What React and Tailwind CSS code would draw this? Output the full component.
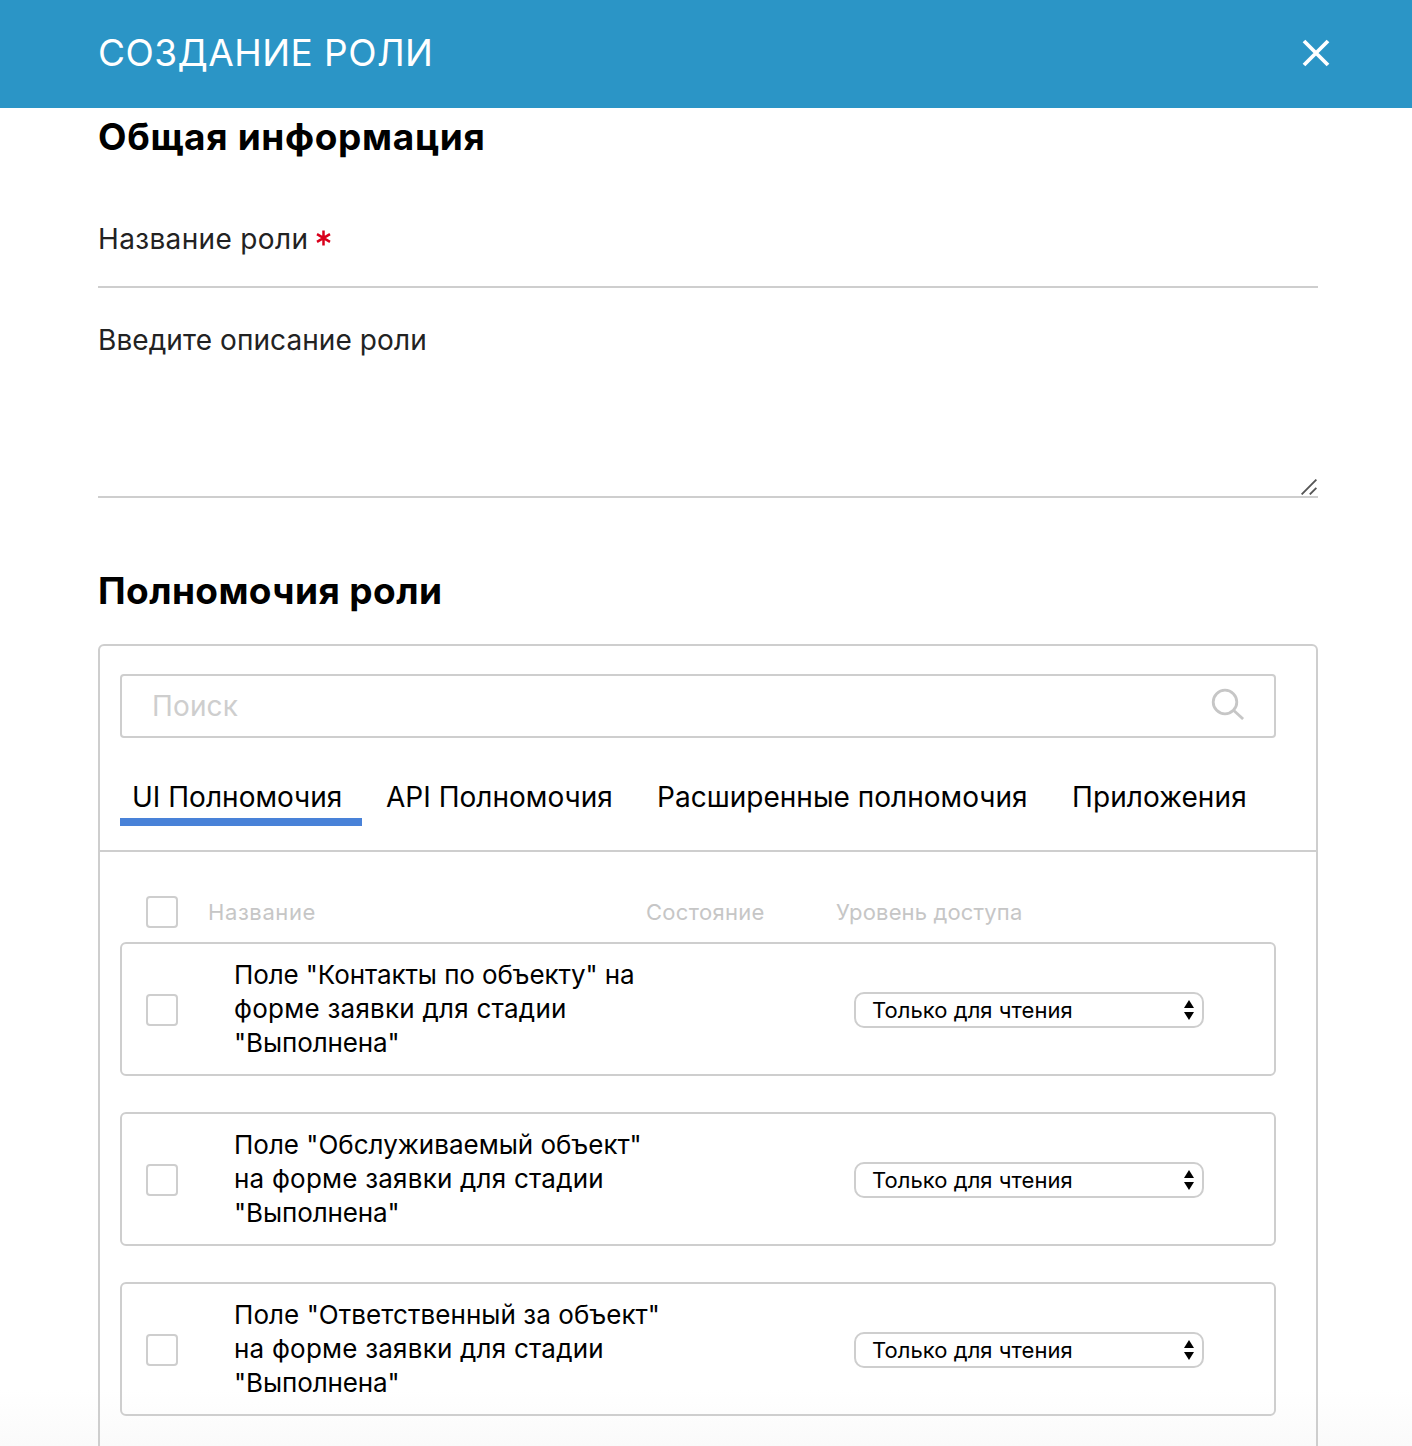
const rows = [
  [
    { text: 'Поле "Контакты по объекту" на', track: "tracking-[-0.1px]" },
    { text: "форме заявки для стадии", track: "tracking-[0.25px]" },
    { text: '"Выполнена"', track: "tracking-[-0.1px]" },
  ],
  [
    { text: 'Поле "Обслуживаемый объект"', track: "tracking-[0px]" },
    { text: "на форме заявки для стадии", track: "tracking-[0.22px]" },
    { text: '"Выполнена"', track: "tracking-[-0.1px]" },
  ],
  [
    { text: 'Поле "Ответственный за объект"', track: "tracking-[0.06px]" },
    { text: "на форме заявки для стадии", track: "tracking-[0.22px]" },
    { text: '"Выполнена"', track: "tracking-[-0.1px]" },
  ],
];

function Checkbox({ label }) {
  return (
    <span
      role="checkbox"
      aria-checked="false"
      aria-label={label}
      className="block size-8 shrink-0 rounded border-2 border-[#cecece] bg-white"
    />
  );
}

function AccessSelect() {
  return (
    <div className="mt-0.5 flex h-9 w-[350px] items-center justify-between rounded-[10px] border-2 border-[#cecece] bg-white pr-2 pl-4">
      <span className="text-[22px] leading-8 tracking-[0.05px] whitespace-nowrap">Только для чтения</span>
      <svg width="10" height="20" viewBox="0 0 10 20" aria-hidden="true">
        <path d="M5 0 10 8H0ZM0 12h10L5 20Z" fill="#000" />
      </svg>
    </div>
  );
}

function PermissionRow({ lines }) {
  return (
    <div className="flex h-[134px] w-[1156px] items-center rounded-md border-2 border-[#cecece] pl-6">
      <div className="mt-0.5">
        <Checkbox label={lines[0].text} />
      </div>
      <div className="ml-14 w-[620px] text-[26px] leading-[34px] whitespace-nowrap">
        {lines.map((line) => (
          <div key={line.text} className={line.track}>
            {line.text}
          </div>
        ))}
      </div>
      <AccessSelect />
    </div>
  );
}

export default function App() {
  return (
    <div className="h-[1446px] w-[1412px] overflow-hidden bg-[linear-gradient(to_bottom,#fff_1390px,#fafafa_1446px)] font-['Inter',sans-serif] font-normal text-black">
      <header className="flex h-[108px] items-center justify-between bg-[#2b95c6] pr-[82px] pb-0.5 pl-[98px] text-white">
        <h1 className="text-[37px] leading-10 tracking-[0.45px]">СОЗДАНИЕ РОЛИ</h1>
        <svg width="28" height="28" viewBox="0 0 28 28" fill="none" stroke="currentColor" strokeWidth="3.8" aria-label="Закрыть">
          <path d="M2 2 26 26M26 2 2 26" />
        </svg>
      </header>

      <main className="flex w-[1318px] flex-col pl-[98px]">
        <h2 className="mt-[9px] text-[37px] leading-10 font-bold tracking-[0.65px]">
          Общая информация
        </h2>

        <div className="mt-[62px] border-b-2 border-[#cecece] pb-[27px] text-[28px] leading-10 text-[#222]">
          <div className="flex items-center">
            <span className="tracking-[0.35px]">Название роли</span>
            <svg className="mb-[3px] ml-2" width="15" height="16" viewBox="0 0 15 16" fill="none" stroke="#d9001b" strokeWidth="2.5" aria-hidden="true">
              <path d="M7.5 .6v14.8M1 4.2l13 7.6M14 4.2 1 11.8" />
            </svg>
          </div>
        </div>

        <div className="mt-8 flex h-[178px] flex-col justify-between border-b-2 border-[#cecece] text-[28px] leading-10 text-[#222]">
          <span className="tracking-[0.08px]">Введите описание роли</span>
          <svg className="mr-px mb-px self-end" width="16" height="16" viewBox="0 0 16 16" fill="none" stroke="#555" strokeWidth="1.9" aria-hidden="true">
            <path d="M.6 15.4 15.4.6M8.8 15.4l6.6-6.6" />
          </svg>
        </div>

        <h2 className="mt-[73px] text-[37px] leading-10 font-bold tracking-[0.4px]">
          Полномочия роли
        </h2>

        <section className="mt-[33px] h-[820px] rounded-t-md border-2 border-[#cecece]">
          <div className="h-[206px] border-b-2 border-[#cecece] pt-7 pl-5">
            <div className="flex h-16 w-[1156px] items-center justify-between rounded border-2 border-[#cecece] pr-[29px] pl-[30px]">
              <span className="text-[28px] leading-10 tracking-[0.15px] text-[#cecece]">Поиск</span>
              <svg className="mb-1" width="34" height="32" viewBox="0 0 34 32" fill="none" stroke="#c6c6c6" strokeWidth="2.8" aria-hidden="true">
                <circle cx="14" cy="14" r="11.8" />
                <path d="m22.5 22.2 9.6 8.8" />
              </svg>
            </div>
            <nav className="mt-10 flex text-[28px] leading-[38px] whitespace-nowrap">
              <div className="h-12 w-[242px] border-b-8 border-[#4982d8] pl-3 tracking-[0.02px]">UI Полномочия</div>
              <div className="ml-6 w-[271px] tracking-[0.02px]">API Полномочия</div>
              <div className="w-[415px] tracking-[0.02px]">Расширенные полномочия</div>
              <div className="tracking-[0.1px]">Приложения</div>
            </nav>
          </div>

          <div className="pt-11 pl-5">
            <div className="flex items-center pl-[26px] text-[22px] leading-8 whitespace-nowrap text-[#c6c6c6]">
              <Checkbox label="Выбрать все" />
              <span className="ml-[30px] w-[438px] tracking-[0.6px]">Название</span>
              <span className="w-[190px] tracking-[0.3px]">Состояние</span>
              <span className="tracking-[0.15px]">Уровень доступа</span>
            </div>
            <div className="mt-3.5 flex flex-col gap-9">
              {rows.map((lines) => (
                <PermissionRow key={lines[0].text} lines={lines} />
              ))}
            </div>
          </div>
        </section>
      </main>
    </div>
  );
}
